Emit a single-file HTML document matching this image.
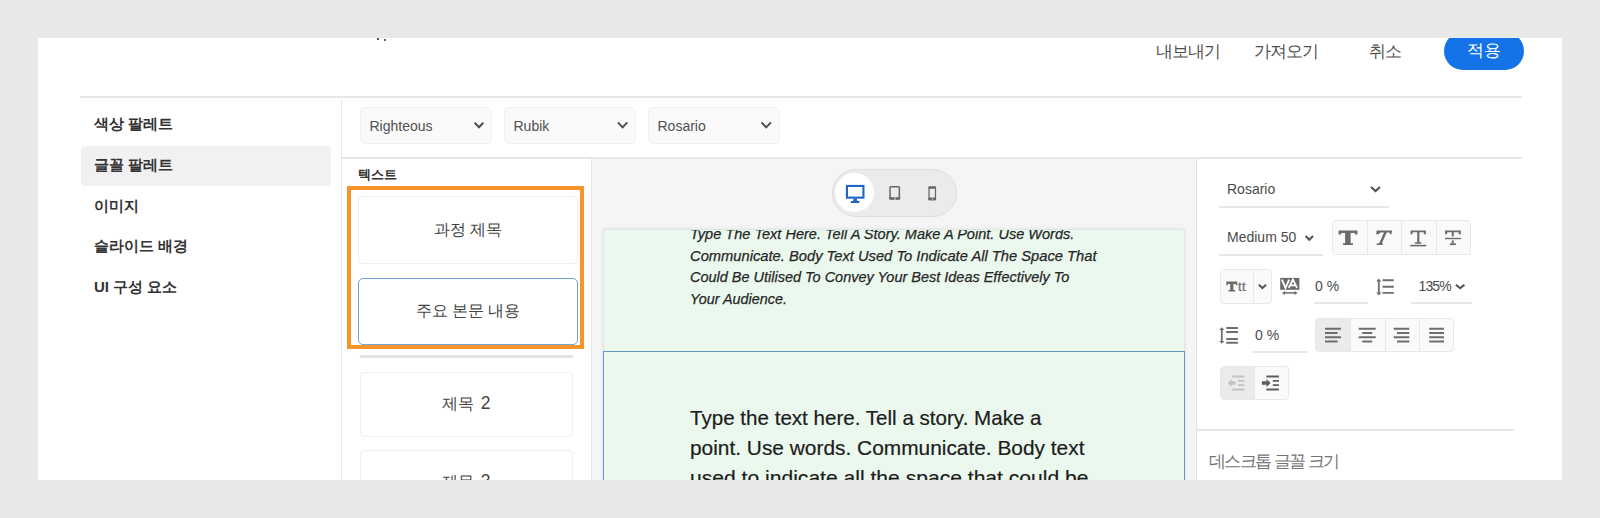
<!DOCTYPE html>
<html><head><meta charset="utf-8">
<style>
*{box-sizing:border-box;margin:0;padding:0}
html,body{width:1600px;height:518px;overflow:hidden;background:#e8e8e8;font-family:"Liberation Sans",sans-serif;color:#2c2c2c;position:relative}
.a{position:absolute}
.clip{position:absolute;left:38px;top:38px;width:1524px;height:442px;background:#fff;overflow:hidden}
.in{position:absolute;left:-38px;top:-38px;width:1600px;height:518px}
.hdr{position:absolute;font-size:17px;letter-spacing:-1px;color:#505050;top:41.5px;line-height:20px;white-space:nowrap}
.btn{position:absolute;left:1444px;top:32px;width:80px;height:38px;border-radius:19px;background:#1473e6;color:#fff;font-size:17px;line-height:20px;text-align:center;padding-top:8.5px}
.hl{position:absolute;background:#e6e6e6}
.nav{position:absolute;left:94px;font-size:15px;font-weight:bold;color:#333;white-space:nowrap;line-height:20px}
.dd{position:absolute;top:107px;height:37px;width:132px;background:#fafafa;border:1px solid #f0f0f0;border-radius:5px;font-size:14px;color:#505050;line-height:37px;padding-left:8.5px}
.chev{position:absolute;width:8px;height:8px;border-right:1.9px solid #505050;border-bottom:1.9px solid #505050;transform:rotate(45deg)}
.tc{position:absolute;background:#fff;border:1px solid #efefef;border-radius:4px;font-size:16px;color:#444;text-align:center;line-height:20px}
.ul{position:absolute;height:2px;background:#e6e6e6}
.grp{position:absolute;border:1px solid #e8e8e8;border-radius:4px;background:#fafafa;overflow:hidden;display:flex}
.grp > div{height:100%;border-left:1px solid #e8e8e8;position:relative}
.grp > div:first-child{border-left:none}
.rt{position:absolute;font-size:14px;color:#4b4b4b;line-height:16px;white-space:nowrap}
</style></head><body>
<div class="clip"><div class="in">
  <!-- header -->
  <div class="a" style="left:377px;top:38px;width:2px;height:2px;background:#555"></div><div class="a" style="left:384px;top:39px;width:2px;height:2px;background:#666"></div>
  <div class="hdr" style="left:1156px">내보내기</div>
  <div class="hdr" style="left:1254px">가져오기</div>
  <div class="hdr" style="left:1369px">취소</div>
  <div class="btn">적용</div>
  <div class="hl" style="left:80px;top:96px;width:1442px;height:2px"></div>

  <!-- left nav -->
  <div class="a" style="left:81px;top:146px;width:250px;height:40px;background:#f1f1f1;border-radius:4px"></div>
  <div class="nav" style="top:114px">색상 팔레트</div>
  <div class="nav" style="top:155px">글꼴 팔레트</div>
  <div class="nav" style="top:196px">이미지</div>
  <div class="nav" style="top:236px">슬라이드 배경</div>
  <div class="nav" style="top:277px">UI 구성 요소</div>
  <div class="a" style="left:341px;top:100px;width:1px;height:400px;background:#e6e6e6"></div>

  <!-- dropdowns -->
  <div class="dd" style="left:360px">Righteous</div>
  <div class="dd" style="left:504px">Rubik</div>
  <div class="dd" style="left:648px">Rosario</div>
  <svg class="a" style="left:0;top:0;overflow:visible" width="1" height="1"><path d="M474.7 122.7L479.0 127.3L483.3 122.7" fill="none" stroke="#505050" stroke-width="2"/></svg><svg class="a" style="left:0;top:0;overflow:visible" width="1" height="1"><path d="M617.9 122.4L622.6 127.4L627.3 122.4" fill="none" stroke="#505050" stroke-width="2"/></svg><svg class="a" style="left:0;top:0;overflow:visible" width="1" height="1"><path d="M761.5 122.4L766.2 127.4L770.9 122.4" fill="none" stroke="#505050" stroke-width="2"/></svg>
  <div class="hl" style="left:342px;top:157px;width:1180px;height:2px"></div>

  <!-- text panel -->
  <div class="a" style="left:358px;top:167px;font-size:13px;font-weight:bold;color:#333;line-height:16px">텍스트</div>
  <div class="tc" style="left:358px;top:196px;width:220px;height:68px;padding-top:23px">과정 제목</div>
  <div class="tc" style="left:358px;top:278px;width:220px;height:67px;padding-top:21.5px;border:1.5px solid #74a3dc;border-radius:5px">주요 본문 내용</div>
  <div class="a" style="left:347px;top:186px;width:237px;height:163px;border:4px solid #f7952a"></div>
  <div class="a" style="left:360px;top:355px;width:213px;height:3px;background:#e3e3e3;border-radius:2px"></div>
  <div class="tc" style="left:360px;top:372px;width:213px;height:65px;padding-top:20px">제목 <span style="font-size:17.5px;margin-left:2px">2</span></div>
  <div class="tc" style="left:360px;top:450px;width:213px;height:65px;padding-top:20px">제목 <span style="font-size:17.5px;margin-left:2px">3</span></div>

  <!-- canvas -->
  <div class="a" style="left:591px;top:159px;width:606px;height:330px;background:#f5f5f5;border-left:1px solid #e6e6e6;border-right:1px solid #e3e3e3"></div>
  <div class="a" style="left:832px;top:169px;width:125px;height:48px;border-radius:24px;background:#ebebeb;border:1.5px solid #dedede"></div>
  <div class="a" style="left:835px;top:173px;width:39px;height:39px;border-radius:20px;background:#fff"></div>
  <svg class="a" style="left:844px;top:183px" width="22" height="22" viewBox="844 183 22 22"><rect x="846.95" y="185.95" width="16.5" height="11.7" fill="none" stroke="#1d67c2" stroke-width="2.1"/><path d="M853.7 198.6H856.7L857.4 201.2H853Z" fill="#1d67c2"/><rect x="850.8" y="201" width="8.6" height="2.1" rx="0.5" fill="#1d67c2"/></svg>
  <svg class="a" style="left:888px;top:185px" width="14" height="16" viewBox="888 185 14 16"><rect x="1290" y="0" width="0" height="0"/><rect x="890.05" y="186.75" width="9.3" height="12" rx="0.8" fill="none" stroke="#666" stroke-width="1.5"/><rect x="889.3" y="197.2" width="10.8" height="2.4" fill="#666"/><rect x="894.5" y="197.6" width="1.1" height="2" fill="#e6e6e6"/></svg>
  <svg class="a" style="left:927px;top:185px" width="11" height="17" viewBox="927 185 11 17"><rect x="929" y="187.1" width="6.5" height="12.6" rx="0.8" fill="none" stroke="#666" stroke-width="1.2"/><rect x="928.4" y="186.5" width="7.7" height="2.3" rx="0.6" fill="#666"/><rect x="928.4" y="197.6" width="7.7" height="2.7" rx="0.6" fill="#666"/><rect x="931.8" y="198.2" width="0.9" height="1.5" fill="#e6e6e6"/></svg>
  <div class="a" style="left:603px;top:229px;width:582px;height:260px;border:1px solid #e0e6e1;box-shadow:0 0 4px rgba(0,0,0,0.07)"></div>
  <div class="a" style="left:604px;top:230px;width:580px;height:260px;background:#ebf8ee;overflow:hidden">
    <div class="a" style="left:86px;top:-7px;font-size:15.1px;font-style:italic;line-height:21.7px;color:#262626;white-space:nowrap;-webkit-text-stroke:0.25px #262626">
      <div style="transform:scaleX(0.964);transform-origin:0 0">Type The Text Here. Tell A Story. Make A Point. Use Words.</div>
      <div style="transform:scaleX(0.975);transform-origin:0 0">Communicate. Body Text Used To Indicate All The Space That</div>
      <div style="transform:scaleX(0.959);transform-origin:0 0">Could Be Utilised To Convey Your Best Ideas Effectively To</div>
      <div style="transform:scaleX(0.952);transform-origin:0 0">Your Audience.</div>
    </div>
        <div class="a" style="left:86px;top:173px;font-size:21px;line-height:29.8px;color:#1c1c1c;white-space:nowrap;-webkit-text-stroke:0.2px #1c1c1c">
      <div style="transform:scaleX(0.980);transform-origin:0 0">Type the text here. Tell a story. Make a</div>
      <div style="transform:scaleX(0.994);transform-origin:0 0">point. Use words. Communicate. Body text</div>
      <div style="transform:scaleX(1.004);transform-origin:0 0">used to indicate all the space that could be</div>
    </div>
  </div>

  <div class="a" style="left:603px;top:351px;width:582px;height:200px;border:1px solid #6496c0"></div>

  <!-- right panel -->
  <div class="rt" style="left:1227px;top:181px">Rosario</div>
  <svg class="a" style="left:0;top:0;overflow:visible" width="1" height="1"><path d="M1371.0 187.0L1375.5 191.1L1380.0 187.0" fill="none" stroke="#505050" stroke-width="2"/></svg>
  <div class="ul" style="left:1219px;top:206px;width:170px"></div>
  <div class="rt" style="left:1227px;top:229px">Medium 50</div>
  <svg class="a" style="left:0;top:0;overflow:visible" width="1" height="1"><path d="M1305.6 236.0L1309.3 239.8L1313.0 236.0" fill="none" stroke="#505050" stroke-width="2"/></svg>
  <div class="ul" style="left:1219px;top:254px;width:104px"></div>
  <div class="grp" style="left:1332px;top:220px;width:139px;height:35px">
    <div style="width:34px"></div><div style="width:35px"></div><div style="width:35px"></div><div style="width:35px"></div>
  </div>
  <svg class="a" style="left:1332px;top:220px" width="140" height="36" viewBox="1332 220 140 36"><g fill="#6b6b6b">
    <path d="M1338.6 230.5H1357.5V234.4H1355.3L1354.6 232.9H1350.6V243.2H1352.9V245.1H1342.9V243.2H1345.1V232.9H1341.5L1340.8 234.4H1338.6Z"/>
    <path d="M1376.6 230.5H1392.1L1391.4 234.3H1389.9L1389.6 232.6H1386.7L1381.9 243.2H1382.9L1382.6 245H1376.6L1377 243.2H1379.2L1384 232.6H1380.4L1378.5 234.3H1376.2Z"/>
    <path d="M1410.5 230.5H1425.9V234.3H1423.8V232.3H1419.4V242.3H1421.3V243.8H1414.8V242.3H1417.2V232.3H1412.6V234.3H1410.5Z"/>
    <rect x="1410.2" y="244.8" width="16" height="1.6"/>
    <path d="M1445.1 230.5H1460.8V234.3H1458.7V232.3H1453.7V236.5H1451.8V232.3H1447.2V234.3H1445.1Z"/>
    <rect x="1445" y="237.8" width="15.8" height="1.4"/>
    <rect x="1451.8" y="240.4" width="1.9" height="3.2"/>
    <rect x="1449.9" y="243.3" width="6" height="1.8"/>
  </g></svg>

  <div class="grp" style="left:1220px;top:269px;width:52px;height:35px">
    <div style="width:33.5px"></div><div style="width:18.5px"></div>
  </div>
  <svg class="a" style="left:1224px;top:279px" width="24" height="15" viewBox="1224 279 24 15"><path d="M1226.3 281.4H1237.3V285.2H1236.1L1235.5 283.9H1233.4V290H1235.2V291.5H1228.5V290H1230.2V283.9H1228.1L1227.5 285.2H1226.3Z" fill="#6b6b6b"/></svg>
  <div class="a" style="left:1238px;top:279.8px;font-family:'Liberation Serif',serif;font-size:14px;color:#6b6b6b;line-height:14px;letter-spacing:0px;white-space:nowrap;-webkit-text-stroke:0.3px #6b6b6b">tt</div>
  <svg class="a" style="left:0;top:0;overflow:visible" width="1" height="1"><path d="M1258.8 284.6L1262.4 288.2L1266.0 284.6" fill="none" stroke="#505050" stroke-width="2"/></svg>
  <svg class="a" style="left:1279px;top:277px" width="22" height="19" viewBox="1279 277 22 19">
    <rect x="1280.2" y="277.9" width="19.2" height="11.9" fill="#6b6b6b"/>
    <path d="M1281.9 279.6L1285.5 287.9L1289.1 279.6M1288.7 287.9L1292.9 279.6L1297 287.9M1290.2 285.3H1295.6" fill="none" stroke="#fff" stroke-width="1.8"/>
    <path d="M1284 292.9H1295.6" stroke="#6b6b6b" stroke-width="1.5"/>
    <path d="M1282 292.9L1285 290.9V294.9ZM1297.6 292.9L1294.6 290.9V294.9Z" fill="#6b6b6b"/>
  </svg>
  <div class="rt" style="left:1315px;top:278px">0 %</div>
  <div class="ul" style="left:1314px;top:302px;width:54px"></div>
  <svg class="a" style="left:1375px;top:278px" width="20" height="18" viewBox="0 0 20 18"><path d="M3.8 2v14" stroke="#6e6e6e" stroke-width="1.8"/><path d="M3.8 0.6l2.6 2.8h-5.2zM3.8 17.4l2.6-2.8h-5.2z" fill="#6e6e6e"/><path d="M7.5 2.2h11.3M7.5 8.7h11.3M7.5 14.9h11.3" stroke="#6e6e6e" stroke-width="1.9"/></svg>
  <div class="rt" style="left:1418.5px;top:278px;letter-spacing:-0.9px">135%</div>
  <svg class="a" style="left:0;top:0;overflow:visible" width="1" height="1"><path d="M1456.0 284.7L1460.2 288.2L1464.4 284.7" fill="none" stroke="#505050" stroke-width="2"/></svg>
  <div class="ul" style="left:1411px;top:302px;width:61px"></div>

  <svg class="a" style="left:1218px;top:326px" width="22" height="19" viewBox="0 0 22 19"><path d="M3.8 2.5v14" stroke="#6e6e6e" stroke-width="1.8"/><path d="M3.8 1.2l2.6 2.8h-5.2zM3.8 17.8l2.6-2.8h-5.2z" fill="#6e6e6e"/><path d="M8.3 2h11.6M8.3 6h11.6M8.3 13h11.6M8.3 16.8h11.6" stroke="#6e6e6e" stroke-width="1.9"/></svg>
  <div class="rt" style="left:1255px;top:327px">0 %</div>
  <div class="ul" style="left:1253px;top:351px;width:55px"></div>
  <div class="grp" style="left:1315px;top:318px;width:139px;height:34px">
    <div style="width:35px;background:#ebebeb"></div>
    <div style="width:35px"></div>
    <div style="width:35px"></div>
    <div style="width:34px"></div>
  </div>
  <svg class="a" style="left:1315px;top:318px" width="140" height="34" viewBox="1315 318 140 34"><g stroke="#6e6e6e" stroke-width="2">
    <path d="M1325 328.8h16M1325 333.1h12.6M1325 337.3h16M1325 341.5h12.6"/>
    <path d="M1358.7 328.8h17M1362.2 333.1h10M1358.7 337.3h17M1362.2 341.5h10"/>
    <path d="M1393.7 328.8h15.6M1397 333.1h12.3M1393.7 337.3h15.6M1397 341.5h12.3"/>
    <path d="M1429.2 328.8h14.8M1429.2 333.1h14.8M1429.2 337.3h14.8M1429.2 341.5h14.8"/>
  </g></svg>
  <div class="grp" style="left:1220px;top:366px;width:69px;height:34px">
    <div style="width:34px;background:#ebebeb"></div>
    <div style="width:35px"></div>
  </div>
  <svg class="a" style="left:1220px;top:366px" width="70" height="34" viewBox="1220 366 70 34">
    <g stroke="#c4c4c4" stroke-width="1.8"><path d="M1232 376.5h12.5M1238 380.9h6.5M1238 385.2h6.5M1232 389.5h12.5"/></g>
    <path d="M1227.6 383l4-4v2.3h3.8v3.4h-3.8v2.3z" fill="#c4c4c4"/>
    <g stroke="#5e5e5e" stroke-width="1.8"><path d="M1266.3 376.5h12.6M1272.8 380.9h6.1M1272.8 385.2h6.1M1266.3 389.5h12.6"/></g>
    <path d="M1270.6 383l-4-4v2.3h-4.7v3.4h4.7v2.3z" fill="#5e5e5e"/>
  </svg>
  <div class="ul" style="left:1197px;top:429px;width:317px"></div>
  <div class="a" style="left:1208.5px;top:452px;font-size:17px;letter-spacing:-1.5px;color:#757575;line-height:20px;white-space:nowrap">데스크톱 글꼴 크기</div>
</div></div>
</body></html>
